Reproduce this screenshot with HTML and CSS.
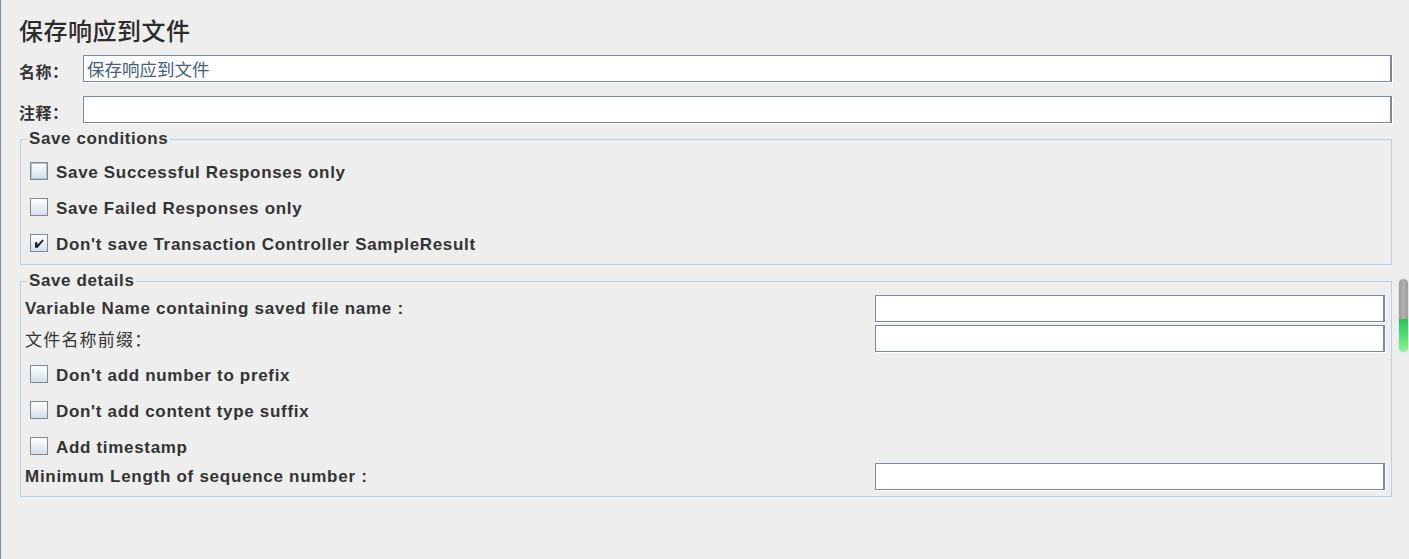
FILE: index.html
```html
<!DOCTYPE html>
<html lang="zh">
<head>
<meta charset="utf-8">
<title>保存响应到文件</title>
<link rel="stylesheet" href="styles.css">
</head>
<body>
<div class="page">
  <div class="content">
    <h1 class="title">保存响应到文件</h1>
    <div class="field-row">
      <span class="cjk-label">名称：</span>
      <div class="text-input wide"><span class="input-value">保存响应到文件</span></div>
    </div>
    <div class="field-row second">
      <span class="cjk-label">注释：</span>
      <div class="text-input wide"></div>
    </div>

    <fieldset class="group g1">
      <legend>Save conditions</legend>
      <div class="check-row"><span class="checkbox focused"></span><span class="check-text">Save Successful Responses only</span></div>
      <div class="check-row"><span class="checkbox"></span><span class="check-text">Save Failed Responses only</span></div>
      <div class="check-row"><span class="checkbox checked"><svg viewBox="0 0 18 18" width="18" height="18"><path d="M5 8.2 L7.4 8.2 L7.4 10.8 L12.4 5.4 L13.8 6.6 L7.6 13.8 L5 13.8 Z" fill="#1e1e1e"/></svg></span><span class="check-text">Don't save Transaction Controller SampleResult</span></div>
    </fieldset>

    <fieldset class="group g2">
      <legend>Save details</legend>
      <div class="pair-row"><span class="label">Variable Name containing saved file name :</span><div class="text-input small"></div></div>
      <div class="pair-row gap"><span class="label cjk-plain">文件名称前缀：</span><div class="text-input small"></div></div>
      <div class="check-row first"><span class="checkbox"></span><span class="check-text">Don't add number to prefix</span></div>
      <div class="check-row"><span class="checkbox"></span><span class="check-text">Don't add content type suffix</span></div>
      <div class="check-row"><span class="checkbox"></span><span class="check-text">Add timestamp</span></div>
      <div class="pair-row last"><span class="label">Minimum Length of sequence number :</span><div class="text-input small"></div></div>
    </fieldset>
  </div>
  <div class="scroll-col">
    <div class="thumb"><div class="thumb-grey"></div><div class="thumb-green"></div></div>
  </div>
</div>
</body>
</html>
```
FILE: styles.css
```css
html, body {
  margin: 0;
  padding: 0;
}
body {
  background: #eeeeee;
  font-family: "Liberation Sans", Arial, sans-serif;
  color: #333333;
}
.page {
  display: flex;
  width: 1409px;
  height: 559px;
  box-sizing: border-box;
  border-left: 1px solid #7d8b9a;
}
.content {
  width: 1391px;
  flex: none;
}
.title {
  margin: 0;
  padding: 12px 0 0 18px;
  height: 36px;
  font: 500 24px/36px "Noto Sans CJK SC", sans-serif;
  letter-spacing: 0.5px;
  color: #2b2b2b;
}
.field-row {
  display: flex;
  align-items: center;
  height: 27px;
  margin-top: 7px;
  padding-left: 18px;
}
.field-row.second {
  margin-top: 14px;
}
.cjk-label {
  width: 64px;
  flex: none;
  font: 700 16px/20px "Noto Sans CJK SC", sans-serif;
  letter-spacing: 0.5px;
  padding-top: 5px;
  color: #333;
}
.text-input {
  box-sizing: border-box;
  height: 27px;
  background: #ffffff;
  border: 1px solid #7b8a99;
  border-right-width: 2px;
  box-shadow: 1px 1px 0 #ffffff;
  display: flex;
  align-items: center;
}
.text-input.wide {
  flex: 1;
}
.text-input.small {
  width: 510px;
  flex: none;
}
.input-value {
  padding-left: 3px;
  font: 400 17.5px/20px "Noto Sans CJK SC", sans-serif;
  color: #45607c;
}
.group {
  margin: 6px 0 0 19px;
  border: 1px solid #b8cfe5;
  min-width: 0;
}
.group legend {
  margin-left: 6px;
  padding: 0 2px;
  font: 700 17px/20px "Liberation Sans", Arial, sans-serif;
  letter-spacing: 0.6px;
  color: #333;
}
.g1 {
  padding: 4px 0 3px 0;
}
.g2 {
  padding: 4px 6px 6px 4px;
}
.g2 legend {
  margin-left: 2px;
}
.check-row {
  display: flex;
  align-items: center;
  gap: 8px;
  height: 36px;
  padding-left: 9px;
  font: 700 17px/20px "Liberation Sans", Arial, sans-serif;
  letter-spacing: 0.68px;
}
.check-text {
  padding-top: 4px;
}
.g2 .check-row {
  padding-left: 5px;
}
.g2 .check-row.first {
  margin-top: 4px;
}
.checkbox {
  box-sizing: border-box;
  width: 18px;
  height: 18px;
  flex: none;
  border: 1px solid #7b8a99;
  background: linear-gradient(#ffffff, #d3dfea);
  display: flex;
}
.checkbox.focused {
  box-shadow: inset 0 0 0 1px #a9c2dd;
}
.checkbox svg {
  margin: -1px;
}
.pair-row {
  display: flex;
  justify-content: space-between;
  align-items: center;
  height: 27px;
}
.pair-row.gap {
  margin-top: 3px;
}
.pair-row.last {
  margin-top: -1px;
}
.label {
  font: 700 17px/20px "Liberation Sans", Arial, sans-serif;
  letter-spacing: 0.72px;
}
.label.cjk-plain {
  font: 400 17px/20px "Noto Sans CJK SC", sans-serif;
  letter-spacing: 1.2px;
}
.scroll-col {
  flex: none;
  padding-left: 7px;
}
.thumb {
  margin-top: 279px;
  width: 9px;
  height: 73px;
  border-radius: 5px;
  overflow: hidden;
  display: flex;
  flex-direction: column;
  box-shadow: 0 0 2px rgba(0, 0, 0, 0.15);
}
.thumb-grey {
  height: 40px;
  background: linear-gradient(90deg, #9c9c9c, #b0b0b0 50%, #9c9c9c);
}
.thumb-green {
  flex: 1;
  background: linear-gradient(#27c25a, #5fe07a 60%, #8ef39a);
}
```
